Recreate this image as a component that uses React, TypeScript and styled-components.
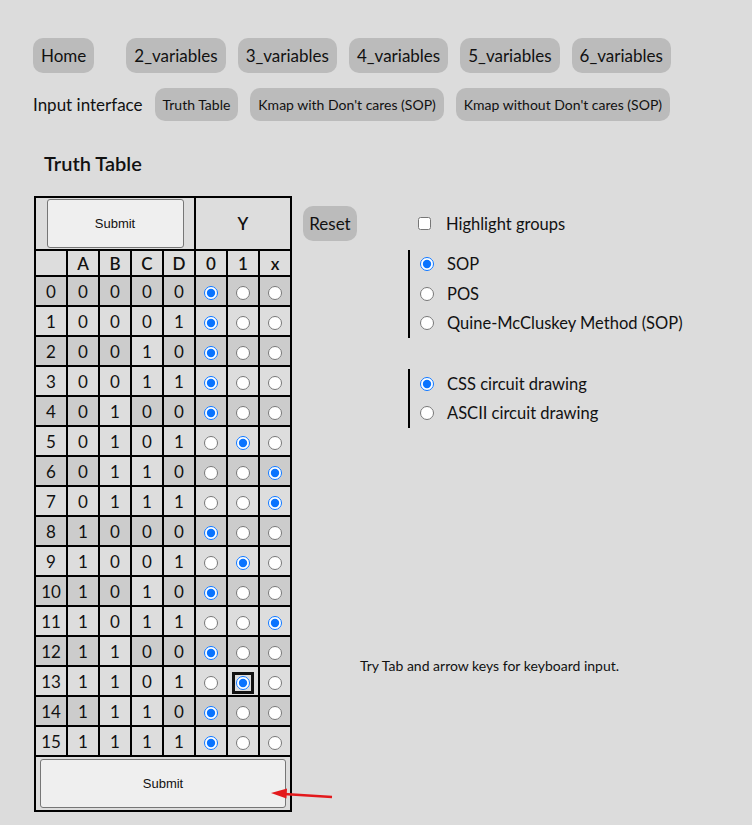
import React from "react";
import styled, { createGlobalStyle } from "styled-components";

const Global = createGlobalStyle`
  html, body { margin: 0; background: #dcdcdc; }
  body { font-family: Lato, "Liberation Sans", sans-serif; color: #111; }
`;

const Page = styled.div`
  position: relative;
  padding: 38px 0 0 33px;
  min-height: 787px;
`;

const NavRow = styled.nav`
  display: flex;
  align-items: center;
  gap: 12px;
`;

const InterfaceRow = styled.div`
  display: flex;
  align-items: center;
  gap: 12px;
  margin-top: 15px;
`;

const Pill = styled.button<{ $small?: boolean; $spaced?: boolean }>`
  font-family: inherit;
  font-size: ${(p) => (p.$small ? "14px" : "17px")};
  height: ${(p) => (p.$small ? "33px" : "35px")};
  padding: 0 8px;
  margin-right: ${(p) => (p.$spaced ? "20px" : "0")};
  border: none;
  border-radius: 10px;
  background: #bbbbbb;
  color: #111;
  cursor: pointer;
`;

const RowLabel = styled.span`
  font-size: 17px;
`;

const Heading = styled.h2`
  margin: 31px 0 0 11px;
  font-size: 20px;
  line-height: 22px;
  font-weight: 600;
`;

const Main = styled.div`
  display: flex;
  align-items: flex-start;
  margin-top: 22px;
  margin-left: 1px;
`;

const Table = styled.table`
  border-collapse: collapse;
  border: 2px solid #000;
  table-layout: fixed;
`;

const Cell = styled.td<{ $dark?: boolean }>`
  border: 2px solid #000;
  width: 30px;
  height: 28px;
  padding: 0;
  text-align: center;
  font-size: 17px;
  background: ${(p) => (p.$dark ? "#cccccc" : "#dddddd")};
`;

const HeadCell = styled.th<{ $tall?: boolean }>`
  border: 2px solid #000;
  padding: 0;
  height: ${(p) => (p.$tall ? "51px" : "24px")};
  text-align: center;
  font-size: 17px;
  font-weight: 600;
  background: #dddddd;
`;

const SubmitButton = styled.button<{ $wide?: boolean }>`
  display: block;
  font-family: "Liberation Sans", Arial, sans-serif;
  font-size: 13px;
  color: #111;
  background: #efefef;
  border: 1px solid #767676;
  border-radius: 3px;
  height: 49px;
  width: ${(p) => (p.$wide ? "246px" : "137px")};
  margin: ${(p) => (p.$wide ? "2px auto" : "0 auto")};
`;

const Radio = styled.input<{ $focused?: boolean }>`
  margin: 0;
  width: 14px;
  height: 14px;
  vertical-align: middle;
  accent-color: #0a74ff;
  ${(p) =>
    p.$focused
      ? `outline: 3px solid #111; outline-offset: 1px; border-radius: 5px;`
      : ""}
`;

const RightArea = styled.div`
  display: flex;
  flex-direction: column;
  margin-left: 11px;
`;

const TopRow = styled.div`
  display: flex;
  align-items: flex-start;
`;

const ResetButton = styled(Pill)`
  margin-top: 10px;
  width: 54px;
  padding: 0;
`;

const Options = styled.div`
  display: flex;
  flex-direction: column;
  margin-left: 51px;
  margin-top: 13px;
`;

const OptionRow = styled.label`
  display: flex;
  align-items: center;
  height: 29.5px;
  font-size: 16.5px;
  gap: 13px;
`;

const CheckRow = styled(OptionRow)`
  padding-left: 10px;
  gap: 15px;
`;

const Group = styled.div<{ $gap: number }>`
  border-left: 2px solid #000;
  padding-left: 10px;
  margin-top: ${(p) => p.$gap}px;
  display: flex;
  flex-direction: column;
`;

const Check = styled.input`
  margin: 0;
  width: 13px;
  height: 13px;
`;

const Hint = styled.p`
  margin: 229px 0 0 57px;
  font-size: 14px;
`;

const Arrow = styled.svg`
  position: absolute;
  left: 268px;
  top: 785px;
  overflow: visible;
`;

type Val = "0" | "1" | "x";
const outputs: Val[] = ["0", "0", "0", "0", "0", "1", "x", "x", "0", "1", "0", "x", "0", "1", "0", "0"];

// light cells inside dark (even) rows: column indexes (0=index,1..4=A..D,5..7 radios)
const lightInEven: Record<number, number[]> = {
  2: [3],
  4: [2],
  6: [2, 3],
  10: [3],
  12: [2],
  14: [2, 3],
};

export default function App() {
  const [vals, setVals] = React.useState<Val[]>(outputs);
  const cols: Val[] = ["0", "1", "x"];
  return (
    <>
      <Global />
      <Page>
        <NavRow>
          <Pill $spaced>Home</Pill>
          <Pill>2_variables</Pill>
          <Pill>3_variables</Pill>
          <Pill>4_variables</Pill>
          <Pill>5_variables</Pill>
          <Pill>6_variables</Pill>
        </NavRow>
        <InterfaceRow>
          <RowLabel>Input interface</RowLabel>
          <Pill $small>Truth Table</Pill>
          <Pill $small>Kmap with Don't cares (SOP)</Pill>
          <Pill $small>Kmap without Don't cares (SOP)</Pill>
        </InterfaceRow>
        <Heading>Truth Table</Heading>
        <Main>
          <Table>
            <thead>
              <tr>
                <HeadCell $tall colSpan={5}>
                  <SubmitButton>Submit</SubmitButton>
                </HeadCell>
                <HeadCell $tall colSpan={3}>Y</HeadCell>
              </tr>
              <tr>
                <HeadCell></HeadCell>
                <HeadCell>A</HeadCell>
                <HeadCell>B</HeadCell>
                <HeadCell>C</HeadCell>
                <HeadCell>D</HeadCell>
                <HeadCell>0</HeadCell>
                <HeadCell>1</HeadCell>
                <HeadCell>x</HeadCell>
              </tr>
            </thead>
            <tbody>
              {vals.map((v, i) => {
                const bits = [(i >> 3) & 1, (i >> 2) & 1, (i >> 1) & 1, i & 1];
                const even = i % 2 === 0;
                const light = lightInEven[i] || [];
                const dark = (c: number) => even && !light.includes(c);
                return (
                  <tr key={i}>
                    <Cell $dark={dark(0)}>{i}</Cell>
                    {bits.map((b, j) => (
                      <Cell key={j} $dark={dark(j + 1)}>{b}</Cell>
                    ))}
                    {cols.map((c, k) => (
                      <Cell key={c} $dark={dark(k + 5)}>
                        <Radio
                          type="radio"
                          name={`row${i}`}
                          checked={v === c}
                          $focused={i === 13 && c === "1"}
                          onChange={() =>
                            setVals((old) => old.map((o, n) => (n === i ? c : o)))
                          }
                        />
                      </Cell>
                    ))}
                  </tr>
                );
              })}
            </tbody>
            <tfoot>
              <tr>
                <HeadCell colSpan={8}>
                  <SubmitButton $wide>Submit</SubmitButton>
                </HeadCell>
              </tr>
            </tfoot>
          </Table>
          <RightArea>
            <TopRow>
              <ResetButton>Reset</ResetButton>
              <Options>
                <CheckRow>
                  <Check type="checkbox" />
                  Highlight groups
                </CheckRow>
                <Group $gap={11}>
                  <OptionRow>
                    <Radio type="radio" name="method" defaultChecked />
                    SOP
                  </OptionRow>
                  <OptionRow>
                    <Radio type="radio" name="method" />
                    POS
                  </OptionRow>
                  <OptionRow>
                    <Radio type="radio" name="method" />
                    Quine-McCluskey Method (SOP)
                  </OptionRow>
                </Group>
                <Group $gap={31}>
                  <OptionRow>
                    <Radio type="radio" name="drawing" defaultChecked />
                    CSS circuit drawing
                  </OptionRow>
                  <OptionRow>
                    <Radio type="radio" name="drawing" />
                    ASCII circuit drawing
                  </OptionRow>
                </Group>
              </Options>
            </TopRow>
            <Hint>Try Tab and arrow keys for keyboard input.</Hint>
          </RightArea>
        </Main>
        <Arrow width="70" height="20" viewBox="0 0 70 20">
          <line x1="16" y1="9" x2="64" y2="12" stroke="#e3191c" strokeWidth="2.5" />
          <polygon points="3,8 19,3.5 18.5,13.5" fill="#e3191c" />
        </Arrow>
      </Page>
    </>
  );
}
